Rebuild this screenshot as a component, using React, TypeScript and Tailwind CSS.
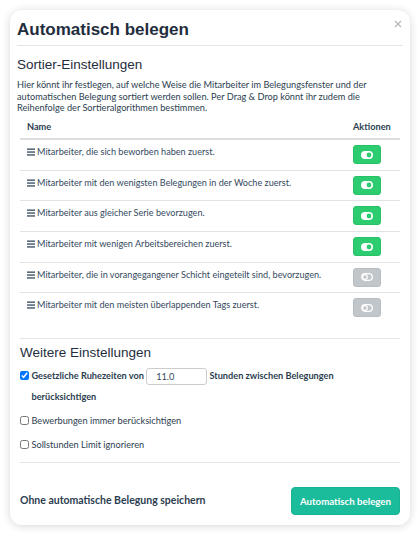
import React from "react";

const rows: { label: string; on: boolean }[] = [
  { label: "Mitarbeiter, die sich beworben haben zuerst.", on: true },
  { label: "Mitarbeiter mit den wenigsten Belegungen in der Woche zuerst.", on: true },
  { label: "Mitarbeiter aus gleicher Serie bevorzugen.", on: true },
  { label: "Mitarbeiter mit wenigen Arbeitsbereichen zuerst.", on: true },
  { label: "Mitarbeiter, die in vorangegangener Schicht eingeteilt sind, bevorzugen.", on: false },
  { label: "Mitarbeiter mit den meisten überlappenden Tags zuerst.", on: false },
];

function Bars() {
  return (
    <svg width="8" height="8" viewBox="0 0 8 8" className="shrink-0 mr-[2px] mt-[2px]">
      <rect x="0" y="0.5" width="8" height="1.3" fill="#34495e" />
      <rect x="0" y="3.4" width="8" height="1.3" fill="#34495e" />
      <rect x="0" y="6.3" width="8" height="1.3" fill="#34495e" />
    </svg>
  );
}

function Toggle({ on }: { on: boolean }) {
  return (
    <div
      className={
        on
          ? "w-[28px] h-[19px] rounded-[3px] bg-[#2ecc71] border border-[#27c266] flex items-center justify-center"
          : "w-[28px] h-[19px] rounded-[3px] bg-[#c1c6ca] border border-[#b8bdc1] flex items-center justify-center"
      }
    >
      {on ? (
        <svg width="12" height="8" viewBox="0 0 12 8">
          <rect x="0" y="0" width="12" height="8" rx="4" fill="#ffffff" />
          <circle cx="8" cy="4" r="2.4" fill="#2ecc71" />
        </svg>
      ) : (
        <svg width="12" height="8" viewBox="0 0 12 8">
          <rect x="0.7" y="0.7" width="10.6" height="6.6" rx="3.3" fill="none" stroke="#ffffff" strokeWidth="1.3" />
          <circle cx="4" cy="4" r="2.3" fill="none" stroke="#ffffff" strokeWidth="1.2" />
        </svg>
      )}
    </div>
  );
}

export default function App() {
  return (
    <div className="w-[420px] h-[536px] bg-white p-[10px] font-['Lato',sans-serif] text-[#34495e]">
      <div className="w-[400px] rounded-[12px] bg-white shadow-[0_1px_8px_rgba(0,0,0,0.16)] flex flex-col">
        {/* header */}
        <div className="mx-[7px] pt-[10px] pb-[5px] border-b border-[#e5e5e5] flex justify-between items-start">
          <h1 className="font-['Liberation_Sans',Arial,sans-serif] font-bold text-[17px] leading-[20px] text-[#1f2d3d]">
            Automatisch belegen
          </h1>
          <svg width="8" height="8" viewBox="0 0 8 8" className="mt-[0px] mr-[1px]">
            <path d="M1 1 L7 7 M7 1 L1 7" stroke="#b5b5b5" strokeWidth="1.1" />
          </svg>
        </div>

        {/* Sortier */}
        <div className="px-[7px] pt-[11px]">
          <h2 className="font-['Liberation_Sans',Arial,sans-serif] text-[13.5px] leading-[16px] text-[#1f2d3d]">
            Sortier-Einstellungen
          </h2>
          <p className="mt-[6px] text-[9.2px] leading-[11.5px] text-[#2c3e50]">
            Hier könnt ihr festlegen, auf welche Weise die Mitarbeiter im Belegungsfenster und der automatischen
            Belegung sortiert werden sollen. Per Drag &amp; Drop könnt ihr zudem die Reihenfolge der
            Sortieralgorithmen bestimmen.
          </p>
        </div>

        {/* table */}
        <div className="mx-[10px] mt-[5.5px]">
          <div className="flex border-b-2 border-[#dddddd] pt-[2px] pb-[5px] text-[9.2px] leading-[12px] font-bold text-[#2c3e50]">
            <div className="flex-1 px-[7px]">Name</div>
            <div className="w-[54px] px-[7px]">Aktionen</div>
          </div>
          {rows.map((r, i) => (
            <div
              key={i}
              className={
                i === 0
                  ? "flex pt-[5px] pb-[5.7px] text-[9.1px] leading-[12px]"
                  : "flex pt-[5px] pb-[5.7px] text-[9.1px] leading-[12px] border-t border-[#e3e3e3]"
              }
            >
              <div className="flex-1 px-[7px] flex items-start pt-[1px]">
                <Bars />
                <span>{r.label}</span>
              </div>
              <div className="w-[54px] px-[7px]">
                <Toggle on={r.on} />
              </div>
            </div>
          ))}
        </div>

        {/* weitere */}
        <div className="mx-[10px] mt-[15px] border-t border-[#e5e5e5] pt-[6px]">
          <h2 className="font-['Liberation_Sans',Arial,sans-serif] text-[13.5px] leading-[16px] text-[#1f2d3d]">
            Weitere Einstellungen
          </h2>
          <div className="mt-[4px] flex flex-col gap-[3px] text-[9.2px] leading-[21px] text-[#2c3e50]">
            <label className="flex items-start font-bold">
              <input type="checkbox" defaultChecked className="w-[9px] h-[9px] m-0 mt-[6px] mr-[2.5px] shrink-0" />
              <span>
                Gesetzliche Ruhezeiten von{" "}
                <input
                  type="text"
                  defaultValue="11.0"
                  className="w-[61px] h-[17px] align-middle border border-[#cccccc] rounded-[3px] px-[9px] text-[9.2px] font-normal text-[#34495e] outline-none"
                />{" "}
                Stunden zwischen Belegungen berücksichtigen
              </span>
            </label>
            <label className="flex items-start">
              <input type="checkbox" className="w-[9px] h-[9px] m-0 mt-[6px] mr-[2.5px] shrink-0" />
              <span>Bewerbungen immer berücksichtigen</span>
            </label>
            <label className="flex items-start">
              <input type="checkbox" className="w-[9px] h-[9px] m-0 mt-[6px] mr-[2.5px] shrink-0" />
              <span>Sollstunden Limit ignorieren</span>
            </label>
          </div>
        </div>

        {/* footer */}
        <div className="mx-[10px] mt-[7px] border-t border-[#e5e5e5] pt-[24px] pb-[10px] flex items-center justify-between">
          <span className="text-[10.5px] font-bold text-[#2c3e50]">Ohne automatische Belegung speichern</span>
          <button className="h-[28px] px-[8px] rounded-[4px] bg-[#1abc9c] border border-[#17b394] text-white text-[9.7px] font-bold">
            Automatisch belegen
          </button>
        </div>
      </div>
    </div>
  );
}
